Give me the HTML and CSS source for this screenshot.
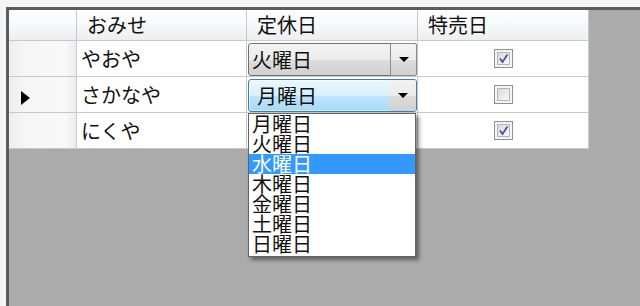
FILE: index.html
```html
<!DOCTYPE html>
<html>
<head>
  <meta charset="UTF-8">
  <title>DataGridView</title>
  <link rel="stylesheet" href="styles.css">
</head>
<body>
  <div class="frame">
    <div class="grid">
      <div class="corner"></div>
      <div class="colhead">おみせ</div>
      <div class="colhead">定休日</div>
      <div class="colhead">特売日</div>

      <div class="rowhead"></div>
      <div class="cell">やおや</div>
      <div class="cell combo-cell">
        <div class="combo">
          <span class="combo-text">火曜日</span>
          <span class="combo-btn"><span class="arrow"></span></span>
        </div>
      </div>
      <div class="cell check-cell">
        <span class="box"><span class="box-in">
          <svg width="13" height="13" viewBox="0 0 13 13"><path d="M3 6.5 L5.5 10 L10.5 2.5" fill="none" stroke="#3f50b0" stroke-width="1.8"/></svg>
        </span></span>
      </div>

      <div class="rowhead current"><span class="pointer"></span></div>
      <div class="cell">さかなや</div>
      <div class="cell combo-cell">
        <div class="combo focused">
          <span class="combo-text">月曜日</span>
          <span class="combo-btn"><span class="arrow"></span></span>
        </div>
      </div>
      <div class="cell check-cell">
        <span class="box"><span class="box-in"></span></span>
      </div>

      <div class="rowhead"></div>
      <div class="cell">にくや</div>
      <div class="cell"></div>
      <div class="cell check-cell">
        <span class="box"><span class="box-in">
          <svg width="13" height="13" viewBox="0 0 13 13"><path d="M3 6.5 L5.5 10 L10.5 2.5" fill="none" stroke="#3f50b0" stroke-width="1.8"/></svg>
        </span></span>
      </div>
    </div>

    <ul class="droplist">
      <li>月曜日</li>
      <li>火曜日</li>
      <li class="selected">水曜日</li>
      <li>木曜日</li>
      <li>金曜日</li>
      <li>土曜日</li>
      <li>日曜日</li>
    </ul>
  </div>
</body>
</html>
```

FILE: styles.css
```css
html, body { margin: 0; height: 100%; }
body { background: #f5f5f5; font-family: "Noto Sans CJK JP", sans-serif; color: #111; overflow: hidden; }

.frame { position: relative; margin: 7px 0 0 6px; height: calc(100% - 7px); box-sizing: border-box; border-top: 3px solid #5c5c5c; border-left: 3px solid #5c5c5c; background: #ababab; }

.grid { display: grid; grid-template-columns: 67px 169px 170px 170px; grid-template-rows: 30px 35px 35px 35px; gap: 1px; width: fit-content; background: #c8c8c8; border-right: 1px solid #c8c8c8; border-bottom: 1px solid #c8c8c8; }

.corner, .colhead { background: linear-gradient(#ffffff, #f7f8fa 50%, #eceef1); }
.colhead { font-size: 20px; line-height: 30px; padding-left: 10px; }

.rowhead { background: linear-gradient(to right, #eeeeee, #f6f6f6 25%, #f8f8f8 85%, #ececec); display: flex; align-items: center; }
.pointer { margin: 6px 0 0 12px; width: 0; height: 0; border-left: 9px solid #000; border-top: 7px solid transparent; border-bottom: 7px solid transparent; }

.cell { background: #fff; font-size: 20px; line-height: 35px; padding-left: 4px; }
.combo-cell { padding: 2px 0 0 1px; }
.check-cell { padding: 0; display: flex; align-items: center; justify-content: center; }

.combo { display: flex; height: 33px; box-sizing: border-box; border: 1px solid #707070; border-radius: 3px; background: linear-gradient(#f3f3f3, #ebebeb 50%, #dddddd 51%, #d0d0d0); }
.combo-text { flex: 1; line-height: 31px; padding-left: 3px; }
.combo-btn { width: 27px; box-sizing: border-box; border: 1px solid #8c8c8c; border-radius: 0 2px 2px 0; margin: -1px -1px -1px 0; display: flex; align-items: center; justify-content: center; background: linear-gradient(#f3f3f3, #ebebeb 50%, #dddddd 51%, #d0d0d0); }
.arrow { width: 0; height: 0; border-top: 5px solid #000; border-left: 5px solid transparent; border-right: 5px solid transparent; }

.combo.focused { border-color: #3c7fb1; background: linear-gradient(#eaf6fd, #d9f0fc 50%, #bee6fd 51%, #a7d9f5); box-shadow: inset 0 0 0 1px rgba(255,255,255,0.5); }
.combo.focused .combo-text { padding-left: 8px; }
.combo.focused .combo-btn { border: none; margin: 0; }

.box { width: 19px; height: 19px; box-sizing: border-box; border: 1px solid #8f8f8f; background: #f4f4f4; padding: 2px; }
.box-in { display: block; height: 100%; box-sizing: border-box; border: 1px solid #b4b4b4; background: linear-gradient(135deg, #d9d9d9, #f9f9f9); }
.box-in svg { display: block; margin: -1px 0 0 -1px; }

.droplist { position: absolute; left: 239px; top: 103px; width: 168px; margin: 0; padding: 0 0 2px 0; list-style: none; box-sizing: border-box; border: 1px solid #646464; background: #fff; box-shadow: 3px 3px 4px rgba(0,0,0,0.45); font-size: 20px; line-height: 20px; }
.droplist li { height: 20px; padding-left: 3px; }
.droplist li.selected { background: #3399ff; color: #fff; }
```
